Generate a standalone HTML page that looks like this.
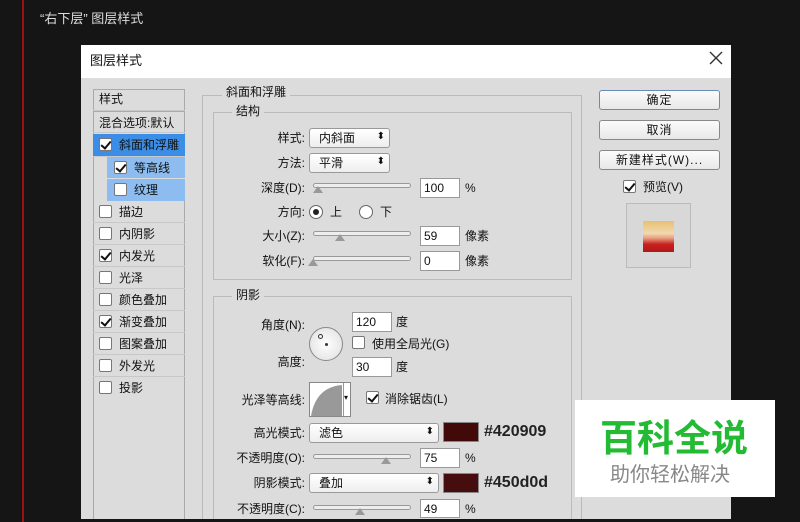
<!DOCTYPE html>
<html><head><meta charset="utf-8"><style>
*{margin:0;padding:0;box-sizing:border-box}
html,body{width:800px;height:522px;overflow:hidden}
body{background:#151515;position:relative;font-family:"Liberation Sans","Noto Sans CJK SC",sans-serif;font-size:12px;color:#111}
.a{position:absolute}
.t{position:absolute;white-space:nowrap;line-height:14px}
.r{text-align:right}
.cb{position:absolute;width:13px;height:13px;border:1px solid #777;background:#fff;border-radius:2px}
.cb.on::after{content:"";position:absolute;left:3px;top:0px;width:4px;height:8px;border:solid #111;border-width:0 2px 2px 0;transform:rotate(40deg)}
.item{position:absolute;left:93px;width:92px;height:22px;border-bottom:1px solid #c8c8c8}
.sel{position:absolute;height:20px;border:1px solid #999;border-radius:3px;background:linear-gradient(#fff,#eee)}
.sel::after{content:"⬍";position:absolute;right:4px;top:2px;font-size:10px}
.inp{position:absolute;height:20px;width:40px;border:1px solid #999;background:#fff;padding-left:3px;line-height:18px}
.sl{position:absolute;height:5px;border:1px solid #999;border-radius:3px;background:#eee}
.th{position:absolute;width:0;height:0;border-left:5px solid transparent;border-right:5px solid transparent;border-bottom:7px solid #999}
.grp{position:absolute;border:1px solid #bbb}
.lg{position:absolute;background:#dcdcdc;padding:0 4px;line-height:14px}
.btn{position:absolute;left:599px;width:121px;height:20px;border:1px solid #888;border-radius:3px;background:linear-gradient(#fbfbfb,#e8e8e8);text-align:center;line-height:18px;letter-spacing:1px}
</style></head><body>
<div class="a" style="left:22px;top:0;width:2px;height:522px;background:#a01010"></div>
<div class="t" style="left:40px;top:12px;color:#ddd;font-size:13px">“右下层”&nbsp;图层样式</div>
<div class="a" style="left:81px;top:45px;width:650px;height:474px;background:#dcdcdc;overflow:hidden">
<div class="grp" style="left:121px;top:50px;width:380px;height:440px"></div>
<div class="grp" style="left:132px;top:251px;width:359px;height:240px"></div>
</div>
<div class="a" style="left:81px;top:45px;width:650px;height:33px;background:#fff"></div>
<div class="t" style="left:90px;top:54px;font-size:13px">图层样式</div>
<svg class="a" style="left:709px;top:51px" width="14" height="14"><path d="M1 1L13 13M13 1L1 13" stroke="#333" stroke-width="1.4"/></svg>

<div class="a" style="left:93px;top:89px;width:92px;height:430px;border:1px solid #aaa;border-bottom:none;background:#dcdcdc"></div>
<div class="item" style="top:89px"><span class="t" style="left:6px;top:3px">样式</span></div>
<div class="item" style="top:111px;border-top:1px solid #aaa"><span class="t" style="left:6px;top:4px">混合选项:默认</span></div>
<div class="item" style="top:134px;background:#3b8de6;height:23px"><div class="cb on" style="left:6px;top:4px"></div><span class="t" style="left:26px;top:4px">斜面和浮雕</span></div>
<div class="a" style="left:107px;top:157px;width:78px;height:44px;background:#8cbcf0"></div>
<div class="cb on" style="left:114px;top:161px"></div><span class="t" style="left:134px;top:161px">等高线</span>
<div class="a" style="left:107px;top:178px;width:78px;height:1px;background:#dcdcdc"></div>
<div class="cb" style="left:114px;top:183px"></div><span class="t" style="left:134px;top:183px">纹理</span>
<div class="item" style="top:201px"><div class="cb" style="left:6px;top:4px"></div><span class="t" style="left:26px;top:4px">描边</span></div>
<div class="item" style="top:223px"><div class="cb" style="left:6px;top:4px"></div><span class="t" style="left:26px;top:4px">内阴影</span></div>
<div class="item" style="top:245px"><div class="cb on" style="left:6px;top:4px"></div><span class="t" style="left:26px;top:4px">内发光</span></div>
<div class="item" style="top:267px"><div class="cb" style="left:6px;top:4px"></div><span class="t" style="left:26px;top:4px">光泽</span></div>
<div class="item" style="top:289px"><div class="cb" style="left:6px;top:4px"></div><span class="t" style="left:26px;top:4px">颜色叠加</span></div>
<div class="item" style="top:311px"><div class="cb on" style="left:6px;top:4px"></div><span class="t" style="left:26px;top:4px">渐变叠加</span></div>
<div class="item" style="top:333px"><div class="cb" style="left:6px;top:4px"></div><span class="t" style="left:26px;top:4px">图案叠加</span></div>
<div class="item" style="top:355px"><div class="cb" style="left:6px;top:4px"></div><span class="t" style="left:26px;top:4px">外发光</span></div>
<div class="item" style="top:377px;border-bottom:none"><div class="cb" style="left:6px;top:4px"></div><span class="t" style="left:26px;top:4px">投影</span></div>

<div class="lg" style="left:222px;top:85px">斜面和浮雕</div>
<div class="grp" style="left:213px;top:112px;width:359px;height:168px"></div>
<div class="lg" style="left:232px;top:104px">结构</div>
<div class="t r" style="left:230px;width:75px;top:131px">样式:</div>
<div class="sel" style="left:309px;top:128px;width:81px"><span class="t" style="left:9px;top:2px">内斜面</span></div>
<div class="t r" style="left:230px;width:75px;top:156px">方法:</div>
<div class="sel" style="left:309px;top:153px;width:81px"><span class="t" style="left:9px;top:2px">平滑</span></div>
<div class="t r" style="left:230px;width:75px;top:181px">深度(D):</div>
<div class="sl" style="left:313px;top:183px;width:98px"></div><div class="th" style="left:313px;top:186px"></div>
<div class="inp" style="left:420px;top:178px">100</div><div class="t" style="left:465px;top:181px">%</div>
<div class="t r" style="left:230px;width:75px;top:205px">方向:</div>
<div class="a" style="left:309px;top:205px;width:14px;height:14px;border:1px solid #666;border-radius:50%;background:#fff"><div class="a" style="left:3px;top:3px;width:6px;height:6px;border-radius:50%;background:#222"></div></div>
<div class="t" style="left:330px;top:205px">上</div>
<div class="a" style="left:359px;top:205px;width:14px;height:14px;border:1px solid #666;border-radius:50%;background:#fff"></div>
<div class="t" style="left:380px;top:205px">下</div>
<div class="t r" style="left:230px;width:75px;top:229px">大小(Z):</div>
<div class="sl" style="left:313px;top:231px;width:98px"></div><div class="th" style="left:335px;top:234px"></div>
<div class="inp" style="left:420px;top:226px">59</div><div class="t" style="left:465px;top:229px">像素</div>
<div class="t r" style="left:230px;width:75px;top:254px">软化(F):</div>
<div class="sl" style="left:313px;top:256px;width:98px"></div><div class="th" style="left:308px;top:259px"></div>
<div class="inp" style="left:420px;top:251px">0</div><div class="t" style="left:465px;top:254px">像素</div>

<div class="lg" style="left:232px;top:288px">阴影</div>
<div class="t r" style="left:230px;width:75px;top:318px">角度(N):</div>
<div class="inp" style="left:352px;top:312px">120</div><div class="t" style="left:396px;top:315px">度</div>
<div class="a" style="left:309px;top:327px;width:34px;height:34px;border:1px solid #888;border-radius:50%;background:radial-gradient(#fff,#ddd)"><div class="a" style="left:15px;top:15px;width:3px;height:3px;background:#333;border-radius:50%"></div><div class="a" style="left:8px;top:6px;width:5px;height:5px;border:1px solid #333;border-radius:50%"></div></div>
<div class="cb" style="left:352px;top:336px"></div><div class="t" style="left:372px;top:337px">使用全局光(G)</div>
<div class="t r" style="left:230px;width:75px;top:355px">高度:</div>
<div class="inp" style="left:352px;top:357px">30</div><div class="t" style="left:396px;top:360px">度</div>
<div class="t r" style="left:230px;width:75px;top:393px">光泽等高线:</div>
<div class="a" style="left:309px;top:382px;width:42px;height:35px;border:1px solid #888;background:#fff;overflow:hidden">
<svg width="34" height="33" class="a" style="left:0;top:0"><path d="M1 33 Q6 4 32 2 L32 33 Z" fill="#999"/></svg>
<div class="a" style="left:33px;top:0;width:1px;height:35px;background:#999"></div><div class="t" style="left:34px;top:8px;font-size:8px">▾</div></div>
<div class="cb on" style="left:366px;top:391px"></div><div class="t" style="left:385px;top:392px">消除锯齿(L)</div>
<div class="t r" style="left:230px;width:75px;top:426px">高光模式:</div>
<div class="sel" style="left:309px;top:423px;width:130px"><span class="t" style="left:9px;top:2px">滤色</span></div>
<div class="a" style="left:443px;top:422px;width:36px;height:20px;background:#420909;border:1px solid #888"></div>
<div class="t" style="left:484px;top:423px;font-size:16px;line-height:18px;font-weight:bold;color:#222">#420909</div>
<div class="t r" style="left:230px;width:75px;top:451px">不透明度(O):</div>
<div class="sl" style="left:313px;top:454px;width:98px"></div><div class="th" style="left:381px;top:457px"></div>
<div class="inp" style="left:420px;top:448px">75</div><div class="t" style="left:465px;top:451px">%</div>
<div class="t r" style="left:230px;width:75px;top:476px">阴影模式:</div>
<div class="sel" style="left:309px;top:473px;width:130px"><span class="t" style="left:9px;top:2px">叠加</span></div>
<div class="a" style="left:443px;top:473px;width:36px;height:20px;background:#450d0d;border:1px solid #888"></div>
<div class="t" style="left:484px;top:474px;font-size:16px;line-height:18px;font-weight:bold;color:#222">#450d0d</div>
<div class="t r" style="left:230px;width:75px;top:502px">不透明度(C):</div>
<div class="sl" style="left:313px;top:505px;width:98px"></div><div class="th" style="left:355px;top:508px"></div>
<div class="inp" style="left:420px;top:499px;height:19px">49</div><div class="t" style="left:465px;top:502px">%</div>

<div class="btn" style="top:90px;border-color:#6a8ab8">确定</div>
<div class="btn" style="top:120px">取消</div>
<div class="btn" style="top:150px">新建样式(W)...</div>
<div class="cb on" style="left:623px;top:180px"></div><div class="t" style="left:643px;top:180px">预览(V)</div>
<div class="a" style="left:626px;top:203px;width:65px;height:65px;border:1px solid #bbb;background:#d8d8d8"></div>
<div class="a" style="left:643px;top:221px;width:31px;height:31px;background:linear-gradient(#e8c070,#f0d8b0 40%,#e8a080 55%,#c82020 75%,#b01818)"></div>

<div class="a" style="left:575px;top:400px;width:200px;height:97px;background:#fff"></div>
<div class="t" style="left:600px;top:418px;font-size:37px;line-height:42px;font-weight:bold;color:#22bb33">百科全说</div>
<div class="t" style="left:610px;top:463px;font-size:20px;line-height:24px;color:#888">助你轻松解决</div>
</body></html>
